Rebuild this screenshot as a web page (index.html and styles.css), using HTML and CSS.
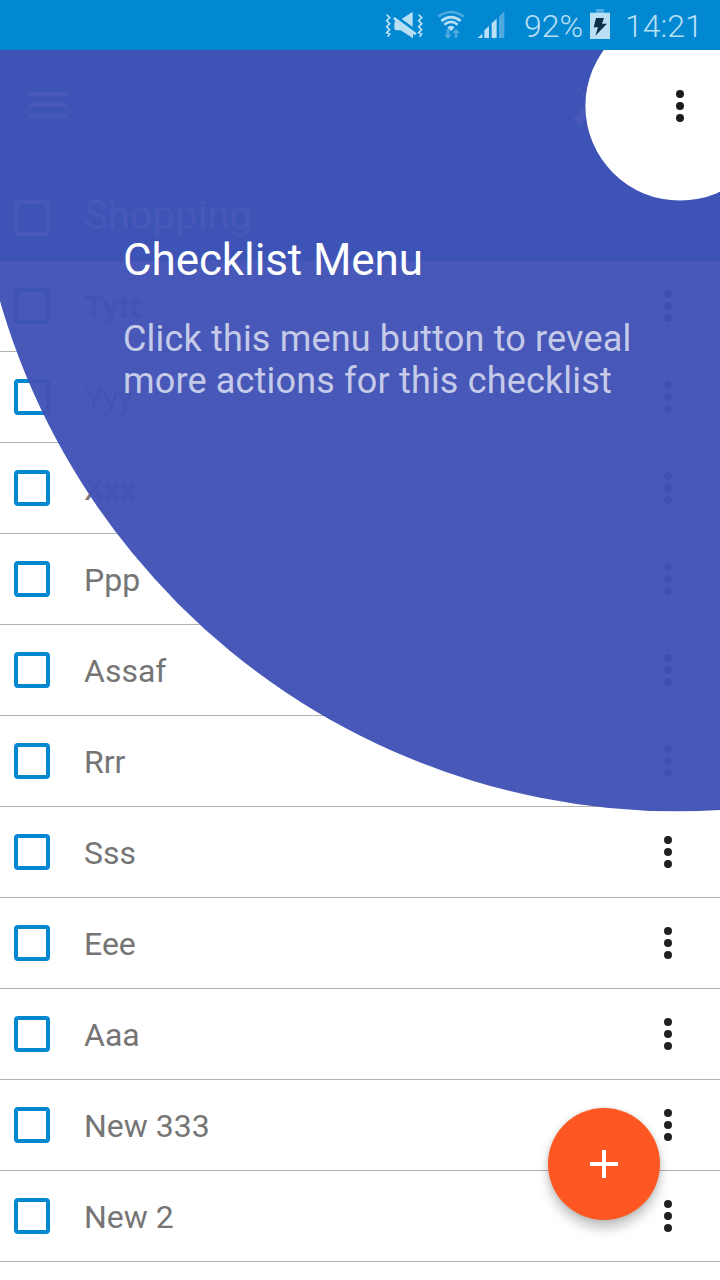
FILE: index.html
```html
<!DOCTYPE html>
<html lang="en">
<head>
<meta charset="utf-8">
<title>Checklist</title>
<link rel="stylesheet" href="styles.css">
</head>
<body>
<div class="screen">
  <header class="status">
    <svg class="mute" width="42" height="32" viewBox="0 0 126 96" fill="#b9dff4">
      <path d="M8 17l9 9-9 9 9 9-9 9 9 9-9 9 9 4-6 8M104 17l9 9-9 9 9 9-9 9 9 9-9 9 9 4-6 8" fill="none" stroke="#b9dff4" stroke-width="5"/>
      <path d="M86 8v46L53 30zM34 36L27 29l5-5 66 49-5 6-6-4v13L50 64H35l-4-5V42z"/>
    </svg>
    <svg class="wifi" width="28" height="30" viewBox="0 0 84 90" fill="none" stroke="#b9dff4" stroke-width="8">
      <path d="M4 20Q42-8 80 20" stroke="#4eaadf"/>
      <path d="M13 33Q42 10 71 33M22 44Q42 27 62 44"/>
      <path d="M31 52Q42 43 53 52L42 64z" fill="#b9dff4" stroke="none"/>
      <path d="M29 57h8v17h8L33 87 21 74h8zM53 83h8V69h8L57 56 45 69h8z" fill="#4eaadf" stroke="none"/>
    </svg>
    <svg class="signal" width="28" height="28" viewBox="0 0 84 84" fill="#b9dff4">
      <path d="M2 81L16 68v13zM22 81V58l14-13v36zM44 81V37l15-14v58z"/>
      <path d="M66 81V17L82 1v80z" fill="#4eaadf"/>
    </svg>
    <span class="percent">92%</span>
    <svg class="battery" width="20" height="30" viewBox="0 0 60 90">
      <path d="M18 0h24v11H18z" fill="#4eaadf"/>
      <path d="M0 11h60v79H0z" fill="#b9dff4"/>
      <path d="M18 27h24l-6 17h15L16 80l8-25H11z" fill="#0b3049"/>
    </svg>
    <span class="clock">14:21</span>
  </header>

  <main class="app">
    <div class="toolbar">
      <svg class="menu" width="38" height="26" viewBox="0 0 38 26" fill="#fff"><path d="M.5 0h37v4H.5zM.5 11h37v4H.5zM.5 22h37v4H.5z"/></svg>
      <svg class="wand" width="40" height="42" viewBox="0 0 40 42" fill="#fff"><path d="M7 1l1 2 2 1-2 1-1 2-1-2-2-1 2-1zM8 9l8-4v8zM1 34l22-22 7 7L8 41z"/></svg>
    </div>
    <div class="title"><i class="box light"></i><h1>Shopping</h1></div>
    <ul class="list">
      <li class="row bold"><i class="box"></i><span>Tytt</span><i class="dots"></i></li>
      <li class="row"><i class="box"></i><span>Yyy</span><i class="dots"></i></li>
      <li class="row"><i class="box"></i><span>Xxx</span><i class="dots"></i></li>
      <li class="row"><i class="box"></i><span>Ppp</span><i class="dots"></i></li>
      <li class="row"><i class="box"></i><span>Assaf</span><i class="dots"></i></li>
      <li class="row"><i class="box"></i><span>Rrr</span><i class="dots"></i></li>
      <li class="row"><i class="box"></i><span>Sss</span><i class="dots"></i></li>
      <li class="row"><i class="box"></i><span>Eee</span><i class="dots"></i></li>
      <li class="row"><i class="box"></i><span>Aaa</span><i class="dots"></i></li>
      <li class="row"><i class="box"></i><span>New 333</span><i class="dots"></i></li>
      <li class="row"><i class="box"></i><span>New 2</span><i class="dots"></i></li>
    </ul>
    <button class="fab" aria-label="Add"><svg width="28" height="28" viewBox="0 0 28 28"><path d="M12 0h4v12h12v4H16v12h-4V16H0v-4h12z" fill="#fff"/></svg></button>

    <section class="overlay">
      <svg class="spot" width="720" height="1230" viewBox="0 50 720 1230">
        <circle cx="678" cy="105.7" r="705.6" fill="#3f51b5" fill-opacity=".96"/>
        <circle cx="680" cy="106" r="94.6" fill="#fff"/>
        <g fill="#1a1a1a"><circle cx="680" cy="94" r="4"/><circle cx="680" cy="106" r="4"/><circle cx="680" cy="118" r="4"/></g>
      </svg>
      <div class="tip">
        <h2>Checklist Menu</h2>
        <p>Click this menu button to reveal<br>more actions for this checklist</p>
      </div>
    </section>
  </main>
</div>
</body>
</html>
```
FILE: styles.css
```css
* { box-sizing: border-box; margin: 0; padding: 0; }
body { background: #fff; font-family: Roboto, sans-serif; }
.screen { width: 720px; height: 1280px; overflow: hidden; display: flex; flex-direction: column; }
.status { height: 50px; flex: none; background: #0288d1; display: flex; align-items: flex-start; padding: 9px 0 0 384px; color: #b9dff4; font-size: 32px; line-height: 34px; font-weight: 350; }
.status svg { flex: none; }
.wifi { margin: 1px 0 0 11px; }
.signal { margin: 2px 0 0 12px; }
.percent { margin-left: 19px; width: 58px; white-space: nowrap; }
.battery { margin: 0 0 0 8px; }
.clock { margin-left: 15px; }
.app { position: relative; flex: 1; overflow: hidden; }
.toolbar { height: 112px; background: #0288d1; display: flex; justify-content: space-between; align-items: center; padding: 0 108px 0 29px; }
.menu { margin-bottom: 2px; }
.title { height: 99px; background: #0288d1; display: flex; align-items: center; padding: 13px 0 0 14px; gap: 34px; color: #fff; }
.title h1 { font-size: 40px; font-weight: 400; line-height: 46px; margin-top: -5px; }
.box { flex: none; width: 36px; height: 36px; border: 4px solid #0288d1; border-radius: 4px; }
.light { border-color: #fff; }
.list { list-style: none; }
.row { height: 91px; border-bottom: 1px solid #b2b2b2; display: flex; align-items: center; padding: 0 48px 0 14px; gap: 34px; font-size: 32px; color: #757575; }
.row span { flex: 1; line-height: 38px; padding-top: 2px; }
.row.bold { font-weight: 700; }
.dots { width: 8px; height: 8px; border-radius: 50%; background: #212121; box-shadow: 0 -12px #212121, 0 12px #212121; }
.fab { position: absolute; right: 60px; bottom: 60px; width: 112px; height: 112px; border: 0; border-radius: 50%; background: #ff5722; display: flex; align-items: center; justify-content: center; box-shadow: 0 8px 12px rgba(0, 0, 0, .24), 0 0 4px rgba(0, 0, 0, .12); }
.overlay { position: absolute; inset: 0; }
.spot { display: block; }
.tip { position: absolute; left: 123px; top: 184px; }
.tip h2 { color: #fff; font-size: 44px; font-weight: 400; line-height: 52px; letter-spacing: -.1px; }
.tip p { margin-top: 32px; color: rgba(255, 255, 255, .7); font-size: 36px; line-height: 42px; letter-spacing: .17px; white-space: nowrap; }
```
